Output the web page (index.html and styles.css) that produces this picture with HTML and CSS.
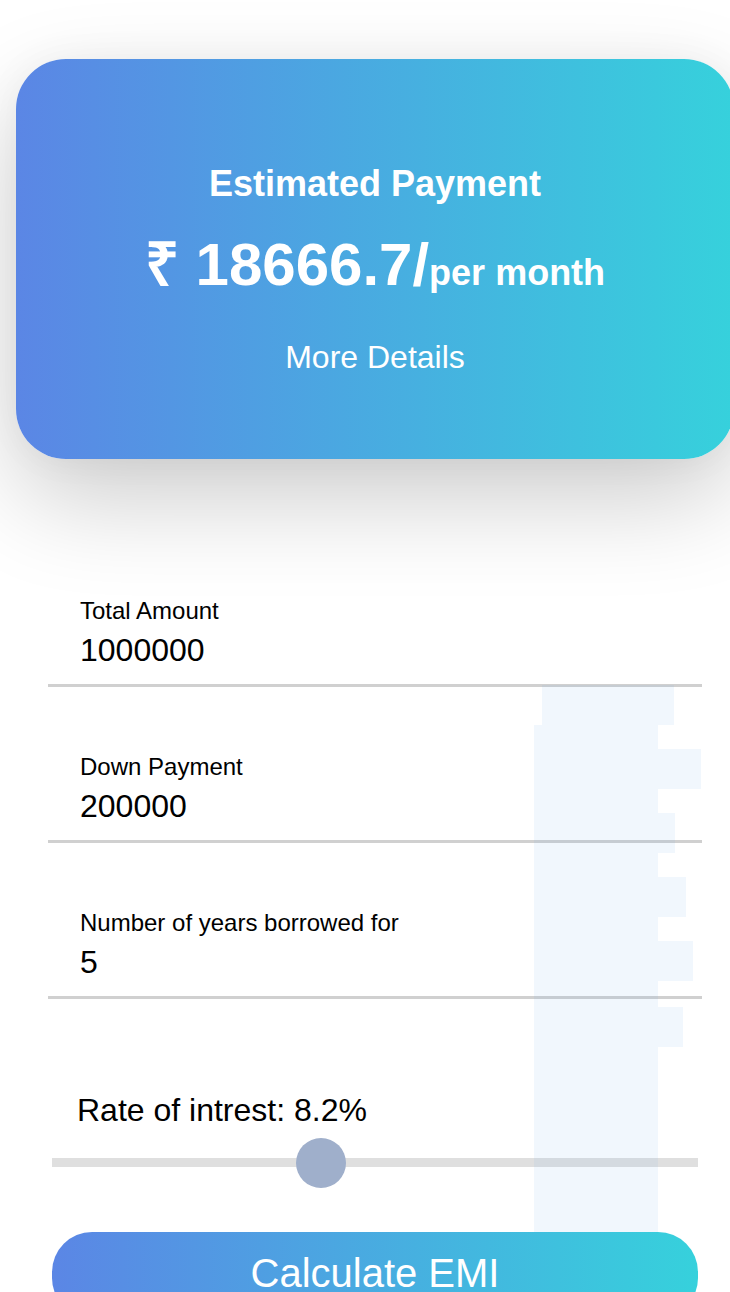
FILE: index.html
```html
<!DOCTYPE html>
<html lang="en">
<head>
<meta charset="utf-8">
<title>EMI Calculator</title>
<link rel="stylesheet" href="styles.css">
</head>
<body>
<div class="page">
  <section class="card">
    <h2 class="card-title">Estimated Payment</h2>
    <p class="amount"><span class="amount-main">₹ 18666.7/</span><span class="amount-unit">per month</span></p>
    <p class="details">More Details</p>
  </section>

  <div class="deco" aria-hidden="true">
    <div class="deco-a"></div>
    <div class="deco-col"></div>
    <div class="deco-b"></div>
    <div class="deco-c"></div>
    <div class="deco-d"></div>
    <div class="deco-e"></div>
    <div class="deco-f"></div>
  </div>

  <form class="form">
    <div class="field">
      <label class="field-label">Total Amount</label>
      <div class="field-value">1000000</div>
    </div>
    <div class="field">
      <label class="field-label">Down Payment</label>
      <div class="field-value">200000</div>
    </div>
    <div class="field">
      <label class="field-label">Number of years borrowed for</label>
      <div class="field-value">5</div>
    </div>

    <div class="rate">
      <div class="rate-label">Rate of intrest: 8.2%</div>
      <input class="slider" type="range" min="0" max="20" step="0.1" value="8.2">
    </div>

    <button class="calc" type="button">Calculate EMI</button>
  </form>
</div>
</body>
</html>
```

FILE: styles.css
```css
html, body {
  margin: 0;
  padding: 0;
  background: #ffffff;
}

body {
  font-family: "Liberation Sans", Arial, Helvetica, sans-serif;
  color: #000;
  overflow: hidden;
}

.page {
  position: relative;
  width: 730px;
  height: 1292px;
  overflow: hidden;
}

.card {
  margin: 59px 0 0 16px;
  width: 718px;
  height: 400px;
  box-sizing: border-box;
  padding-top: 104px;
  border-radius: 50px;
  background: linear-gradient(to right, #5b86e5, #36d1dc);
  box-shadow: 0 40px 100px rgba(0, 0, 0, 0.2), 0 0 40px rgba(0, 0, 0, 0.04);
  color: #fff;
  text-align: center;
}

.card-title {
  margin: 0;
  font-size: 36px;
  line-height: 42px;
  font-weight: 700;
}

.amount {
  margin: 25px 0 0;
  line-height: 70px;
  font-weight: 700;
}

.amount-main {
  font-size: 60px;
}

.amount-unit {
  font-size: 36px;
}

.details {
  margin: 23px 0 0;
  font-size: 32px;
  line-height: 38px;
}

.deco {
  position: absolute;
  left: 0;
  top: 0;
  width: 730px;
  height: 1292px;
  opacity: 0.09;
  pointer-events: none;
  z-index: 1;
}

.deco div {
  position: absolute;
  background: rgb(110, 172, 236);
  height: 40px;
  left: 534px;
}

.deco .deco-a { left: 542px; top: 685px; width: 132px; }
.deco .deco-col { top: 725px; width: 124px; height: 567px; }
.deco .deco-b { top: 749px; width: 167px; }
.deco .deco-c { top: 813px; width: 141px; }
.deco .deco-d { top: 877px; width: 152px; }
.deco .deco-e { top: 941px; width: 159px; }
.deco .deco-f { top: 1007px; width: 149px; }

.form {
  padding-top: 72px;
}

.field {
  margin-left: 48px;
  width: 654px;
  box-sizing: border-box;
  padding: 66px 0 15px 32px;
  border-bottom: 3px solid #d0d0d0;
}

.field-label {
  display: block;
  font-size: 24px;
  line-height: 28px;
  margin-bottom: 6px;
}

.field-value {
  font-size: 32px;
  line-height: 38px;
}

.rate {
  margin: 92px 0 0 52px;
  width: 646px;
}

.rate-label {
  padding-left: 25px;
  font-size: 32px;
  line-height: 38px;
  margin-bottom: 29px;
}

.slider {
  -webkit-appearance: none;
  appearance: none;
  display: block;
  margin: 0;
  padding: 0;
  width: 646px;
  height: 9px;
  background: #dfdfdf;
  outline: none;
  overflow: visible;
}

.slider::-webkit-slider-runnable-track {
  height: 9px;
  background: #dfdfdf;
  border: none;
}

.slider::-webkit-slider-thumb {
  -webkit-appearance: none;
  appearance: none;
  width: 50px;
  height: 50px;
  margin-top: -20.5px;
  border-radius: 50%;
  background: #9fafcb;
  border: none;
}

.calc {
  position: relative;
  z-index: 2;
  display: block;
  margin: 65px 0 0 52px;
  width: 646px;
  padding: 18px 0 22px;
  border: none;
  border-radius: 40px;
  background: linear-gradient(to right, #5b86e5, #36d1dc);
  color: #fff;
  font-family: "Liberation Sans", Arial, Helvetica, sans-serif;
  font-size: 40px;
  line-height: 46px;
  text-align: center;
}
```
